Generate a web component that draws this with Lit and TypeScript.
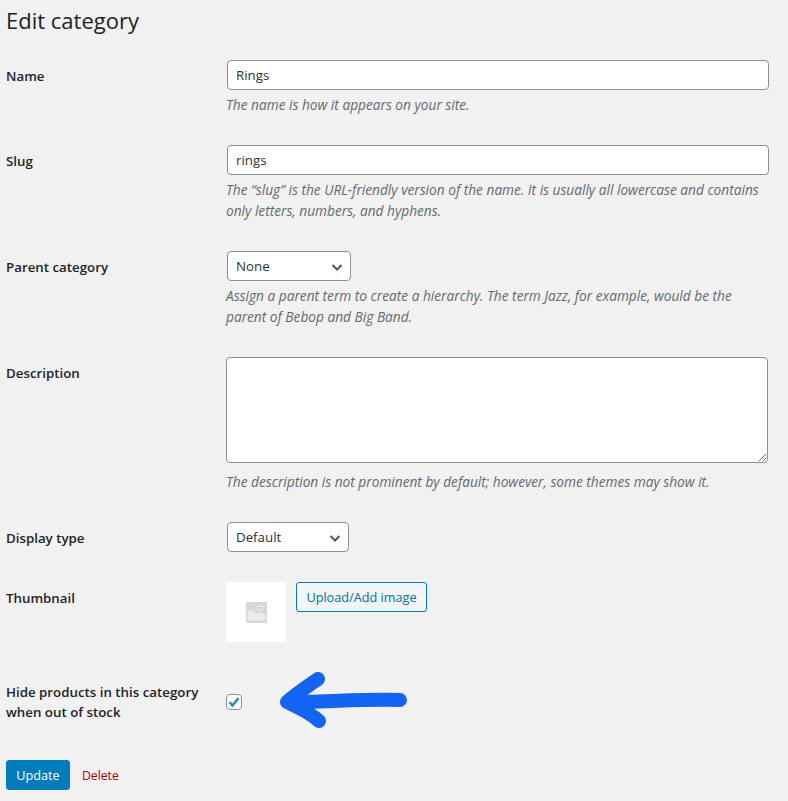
import { LitElement, html, css } from "lit";
import { customElement } from "lit/decorators.js";

@customElement("app-root")
export class AppRoot extends LitElement {
  static styles = css`
    :host {
      display: block;
      width: 788px;
      height: 801px;
      overflow: hidden;
      box-sizing: border-box;
      background: #f1f1f1;
      padding: 0 19px 0 6px;
      font-family: "Open Sans", "Noto Sans", sans-serif;
      font-size: 13.3px;
      line-height: 21px;
      color: #2c3338;
    }
    h1 {
      margin: 0;
      padding-top: 5px;
      height: 60px;
      box-sizing: border-box;
      font-size: 22px;
      line-height: 30px;
      font-weight: 400;
      color: #1d2327;
    }
    .rows {
      display: flex;
      flex-direction: column;
      gap: 29px;
    }
    .row {
      display: grid;
      grid-template-columns: 220px 1fr;
    }
    .row.center {
      align-items: center;
      margin-top: 1px;
    }
    .row.thumb-row {
      margin-top: 1px;
    }
    label {
      display: block;
      padding-top: 6px;
      font-weight: 600;
      color: #1d2327;
    }
    .center label {
      padding-top: 0;
      line-height: 20px;
    }
    .field {
      min-width: 0;
    }
    .control {
      box-sizing: border-box;
      display: block;
      height: 30px;
      margin: 0 0 0 1px;
      padding: 0 8px;
      width: 542px;
      border: 1px solid #8c8f94;
      border-radius: 4px;
      background: #fff;
      color: #2c3338;
      font: inherit;
      outline: none;
    }
    .select {
      display: flex;
      align-items: center;
      justify-content: space-between;
      padding: 0 7px 0 8px;
    }
    .select svg {
      display: block;
      flex: none;
    }
    .w124 {
      width: 124px;
    }
    .w122 {
      width: 122px;
    }
    textarea.control {
      margin: 0;
      height: 106px;
      padding: 2px 6px;
      resize: both;
    }
    p {
      margin: 4px 0 0;
      padding-bottom: 1px;
      font-size: 13.7px;
      font-style: italic;
      color: #646970;
    }
    .after-area {
      margin-top: 8px;
    }
    .thumbrow {
      display: flex;
      gap: 10px;
      align-items: flex-start;
    }
    .thumb {
      width: 60px;
      height: 60px;
      background: #fff;
      display: flex;
      align-items: center;
      justify-content: center;
    }
    .thumb svg {
      display: block;
    }
    button {
      box-sizing: border-box;
      height: 30px;
      border-radius: 3px;
      font: inherit;
      font-size: 12.7px;
      padding: 0;
      cursor: pointer;
    }
    .secondary {
      width: 131px;
      border: 1px solid #007cba;
      background: #f3f5f6;
      color: #0071a1;
    }
    .primary {
      width: 64px;
      border: 1px solid #007cba;
      background: #007cba;
      color: #fff;
    }
    .check-wrap {
      display: flex;
      align-items: center;
      gap: 36px;
    }
    .check {
      box-sizing: border-box;
      width: 16px;
      height: 16px;
      border: 1px solid #8c8f94;
      border-radius: 4px;
      background: #fff;
      display: flex;
      align-items: center;
      justify-content: center;
      flex: none;
    }
    .check svg,
    .arrow {
      display: block;
    }
    .actions {
      display: flex;
      align-items: center;
      gap: 12px;
      margin-top: 28px;
    }
    .delete {
      font-size: 12.2px;
      color: #a00;
      text-decoration: none;
    }
  `;

  private chevron() {
    return html`<svg width="16" height="16" viewBox="0 0 16 16" aria-hidden="true">
      <path d="M5.500 7l4.500 4.500L14.500 7" fill="none" stroke="#50575e" stroke-width="2" />
    </svg>`;
  }

  render() {
    return html`
      <h1>Edit category</h1>
      <div class="rows">
        <div class="row">
          <label>Name</label>
          <div class="field">
            <input class="control" type="text" .value=${"Rings"} />
            <p>The name is how it appears on your site.</p>
          </div>
        </div>
        <div class="row">
          <label>Slug</label>
          <div class="field">
            <input class="control" type="text" .value=${"rings"} />
            <p>The “slug” is the URL-friendly version of the name. It is usually all lowercase and contains only letters, numbers, and hyphens.</p>
          </div>
        </div>
        <div class="row">
          <label>Parent category</label>
          <div class="field">
            <div class="control select w124"><span>None</span>${this.chevron()}</div>
            <p>Assign a parent term to create a hierarchy. The term Jazz, for example, would be the parent of Bebop and Big Band.</p>
          </div>
        </div>
        <div class="row">
          <label>Description</label>
          <div class="field">
            <textarea class="control"></textarea>
            <p class="after-area">The description is not prominent by default; however, some themes may show it.</p>
          </div>
        </div>
        <div class="row">
          <label>Display type</label>
          <div class="field">
            <div class="control select w122"><span>Default</span>${this.chevron()}</div>
          </div>
        </div>
        <div class="row thumb-row">
          <label>Thumbnail</label>
          <div class="field thumbrow">
            <div class="thumb">
              <svg width="21" height="21" viewBox="0 0 21 21" aria-hidden="true">
                <rect width="21" height="21" fill="#d6d6d8" />
                <path d="M1.500 10 4.500 7 11 12 15 10 19.500 13V18.500H1.500z" fill="#ebebed" />
                <circle cx="14.500" cy="6" r="3" fill="#ebebed" />
                <circle cx="14.500" cy="6" r="1.600" fill="#cacacc" />
              </svg>
            </div>
            <button class="secondary">Upload/Add image</button>
          </div>
        </div>
        <div class="row center">
          <label>Hide products in this category<br />when out of stock</label>
          <div class="field check-wrap">
            <div class="check">
              <svg width="14" height="14" viewBox="0 0 14 14" aria-hidden="true">
                <path d="M2.500 7 5.500 10.500 11.500 3" fill="none" stroke="#1e8cbe" stroke-width="2.400" />
              </svg>
            </div>
            <svg class="arrow" width="130" height="60" viewBox="0 0 130 60" aria-hidden="true">
              <path d="M40 7C30 14 18 22 9 30C18 35 30 39 41 49M9 30C45 30 85 27 122 28" fill="none" stroke="#1464f4" stroke-width="14" stroke-linecap="round" stroke-linejoin="round" />
            </svg>
          </div>
        </div>
      </div>
      <div class="actions">
        <button class="primary">Update</button>
        <a class="delete">Delete</a>
      </div>
    `;
  }
}
